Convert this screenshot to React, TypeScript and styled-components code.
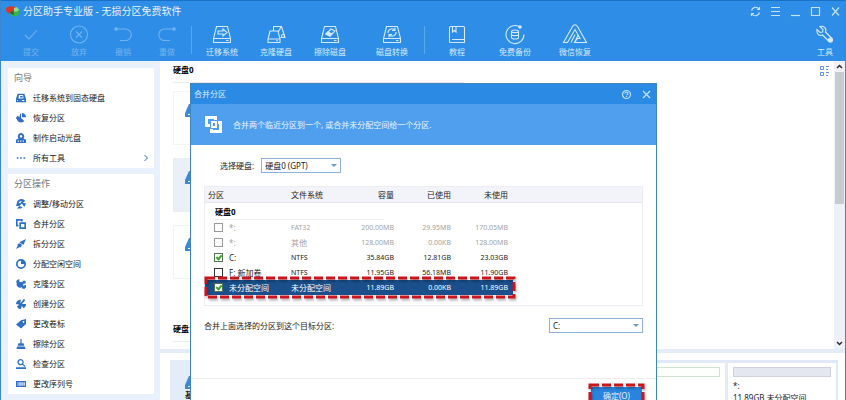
import React, { useState } from "react";
import styled, { createGlobalStyle, css } from "styled-components";

const Global = createGlobalStyle`
  *, *::before, *::after { box-sizing: border-box; }
  body {
    margin: 0;
    font-family: "Noto Sans", "Noto Sans CJK SC", sans-serif;
    font-size: 8px;
    line-height: 12px;
    color: #1c1c1c;
    background: #fff;
  }
  button, input, select { font: inherit; color: inherit; margin: 0; }
  button { border: 0; padding: 0; background: none; cursor: pointer; }
  ul { list-style: none; margin: 0; padding: 0; }
  h1, h2, p { margin: 0; font: inherit; }
`;

/* ---------- window frame ---------- */

const Window = styled.div`
  position: relative;
  display: flex;
  flex-direction: column;
  height: 100vh;
  overflow: hidden;
  border: solid #3a86cf;
  border-width: 0 1px;
`;

const Header = styled.header`
  flex: none;
  background: #2e8de6;
  border-top: 1px solid #1a72c6;
  color: #fff;
`;

const TitleBar = styled.div`
  display: flex;
  align-items: center;
  height: 20px;
  padding-left: 4px;
`;

const AppTitle = styled.h1`
  flex: 1;
  margin-left: 3px;
  font-size: 10px;
  line-height: 16px;
  color: #e6f2fe;
`;

const WindowButton = styled.button`
  display: flex;
  align-items: center;
  justify-content: center;
  width: 20px;
  height: 20px;
  color: #c4e2fb;
`;

const Toolbar = styled.nav`
  display: flex;
  align-items: stretch;
  height: 40px;
  padding-left: 6px;
`;

const Tool = styled.button<{ $width: number; $end?: boolean }>`
  display: flex;
  flex-direction: column;
  align-items: center;
  width: ${(p) => p.$width}px;
  padding-top: 4px;
  gap: 2px;
  color: #d3eafd;
  margin-left: ${(p) => (p.$end ? "auto" : "0")};
  &:disabled { color: #72b3ef; }
`;

const Divider = styled.span`
  flex: none;
  width: 1px;
  margin: 5px 0 7px;
  background: #5ba8ef;
`;

const Body = styled.div`
  display: flex;
  flex: 1;
  min-height: 0;
`;

/* ---------- sidebar ---------- */

const Sidebar = styled.aside`
  flex: none;
  display: flex;
  flex-direction: column;
  gap: 6px;
  width: 159px;
  padding: 7px 6px 0 7px;
  background: #e8f1fc;
`;

const Panel = styled.section`
  flex: none;
  background: #fff;
`;

const PanelTitle = styled.h2`
  padding-left: 6px;
  font-size: 9px;
  line-height: 20px;
  color: #757575;
`;

const PanelItem = styled.button`
  display: flex;
  align-items: center;
  gap: 7px;
  width: 100%;
  height: 20px;
  padding: 0 5px 0 8px;
  text-align: left;
  color: #181818;
  svg { flex: none; color: #2f6fc4; }
  span { flex: 1; }
`;

/* ---------- main area ---------- */

const Main = styled.main`
  display: flex;
  flex: 1;
  flex-direction: column;
  min-width: 0;
`;

const DiskPane = styled.section`
  display: flex;
  flex: 1;
  min-height: 0;
`;

const DiskList = styled.div`
  flex: 1;
  padding: 3px 0 0 13px;
  overflow: hidden;
`;

const DiskTitle = styled.h2`
  width: 45%;
  height: 19px;
  margin-bottom: 8px;
  border-bottom: 1px solid #ececf0;
  font-weight: 700;
  font-size: 8px;
  line-height: 12px;
  color: #000;
`;

const DiskRow = styled.div<{ $active?: boolean }>`
  display: flex;
  align-items: center;
  width: 50%;
  height: 54px;
  margin-bottom: 13px;
  padding: 0 0 16px 11px;
  border: 1px solid ${(p) => (p.$active ? "#e9edf6" : "#f3f4f7")};
  background: ${(p) => (p.$active ? "#ebeff7" : "#fff")};
  color: #3f87d8;
`;

const DiskSpacer = styled.div`
  height: 31px;
`;

const ViewToggle = styled.button`
  align-self: flex-start;
  margin: 3px 4px 0 0;
  color: #5a93e0;
`;

const ScrollTrack = styled.div`
  display: flex;
  flex-direction: column;
  align-items: center;
  width: 11px;
  background: #f0f1f6;
  color: #2c2c2c;
`;

const ScrollButton = styled.button`
  display: flex;
  align-items: center;
  justify-content: center;
  width: 11px;
  height: 11px;
`;

const ScrollThumb = styled.div`
  width: 9px;
  height: 132px;
  background: #c9cacd;
  margin-bottom: auto;
`;

const MapPane = styled.section`
  display: flex;
  flex: 0 0 51px;
  padding: 7px 7px 0 10px;
  border-top: 4px solid #e3ecf7;
  overflow: hidden;
`;

const MapLabel = styled.div`
  width: 120px;
  padding: 16px 0 0 15px;
  background: #e3edfa;
  color: #3f87d8;
  p { color: #222; font-weight: 700; }
  svg { display: block; }
`;

const MapCells = styled.div`
  display: flex;
  flex: 1;
  border: solid #e0e9f5;
  border-width: 3px 2px 0;
`;

const MapCell = styled.div<{ $grow?: boolean }>`
  flex: ${(p) => (p.$grow ? "1" : "0 0 108px")};
  padding: 4px 5px;
  border-right: ${(p) => (p.$grow ? "3px solid #e3ebf6" : "0")};
`;

const UsageBar = styled.div<{ $tone: "free" | "empty" }>`
  height: 10px;
  margin-bottom: 3px;
  border: 1px solid ${(p) => (p.$tone === "free" ? "#cfe3cf" : "#cfd2da")};
  background: ${(p) => (p.$tone === "free" ? "#fdfffd" : "#e4e7ef")};
`;

/* ---------- dialog ---------- */

const Dialog = styled.div`
  position: absolute;
  top: 83px;
  left: 189px;
  right: 188px;
  border: 1px solid #3f87b8;
  background: #fff;
`;

const DialogBar = styled.div`
  display: flex;
  align-items: center;
  height: 20px;
  padding-left: 3px;
  background: #2b8ae4;
  color: #dceefe;
  h2 { flex: 1; }
`;

const Banner = styled.div`
  display: flex;
  align-items: center;
  gap: 11px;
  height: 41px;
  padding-left: 14px;
  background: #509fef;
  color: #ebf5ff;
`;

const DialogBody = styled.div`
  padding: 13px 13px 0 13px;
`;

const Field = styled.div<{ $spread?: boolean }>`
  display: flex;
  align-items: center;
  ${(p) =>
    p.$spread
      ? css`
          justify-content: space-between;
          margin-top: 12px;
        `
      : css`
          gap: 7px;
          padding-left: 16px;
          margin-bottom: 13px;
        `}
`;

const SelectBox = styled.span<{ $width: number }>`
  position: relative;
  width: ${(p) => p.$width}px;
  height: 15px;
  select {
    display: block;
    width: 100%;
    height: 15px;
    padding: 0 12px 0 3px;
    appearance: none;
    border: 1px solid #8fb0d8;
    border-radius: 0;
    background: #fff;
    line-height: 13px;
  }
  svg {
    position: absolute;
    top: 6px;
    right: 4px;
    pointer-events: none;
    color: #6b9cc4;
  }
`;

const TableFrame = styled.div`
  min-height: 120px;
  border: 1px solid #ececf2;
`;

const Table = styled.table`
  width: 100%;
  table-layout: fixed;
  border-collapse: separate;
  border-spacing: 0;
  th, td { padding: 0; text-align: left; white-space: nowrap; }
  thead th {
    height: 16px;
    font-weight: 400;
    background: #f3f4fa;
    border-bottom: 1px solid #e4e5ee;
  }
  thead th:first-child { padding-left: 3px; }
`;

const Num = styled.td`
  && { text-align: right; }
  font-size: 7px;
`;

const NumHead = styled.th`
  && { text-align: right; }
`;

const GroupCell = styled.th`
  && { height: 17px; padding-left: 10px; }
  font-weight: 700;
  color: #000;
  div { width: 169px; border-bottom: 1px solid #ededf1; line-height: 15px; }
`;

const Row = styled.tr<{ $muted?: boolean; $selected?: boolean }>`
  position: relative;
  color: ${(p) => (p.$selected ? "#fff" : p.$muted ? "#a3a3a3" : "#222")};
  td { height: 15px; }
  td:not(:last-child) {
    background: ${(p) => (p.$selected ? "#1a4f8b" : "transparent")};
  }
`;

const Latin = styled.span`
  font-size: 7px;
`;

const PartLabel = styled.label`
  display: flex;
  align-items: center;
  gap: 6px;
  padding-left: 9px;
`;

const Check = styled.input`
  position: relative;
  flex: none;
  appearance: none;
  width: 9px;
  height: 9px;
  border: 1px solid #333;
  background: #fff;
  &:disabled { border-color: #9a9a9a; }
  &:checked { border-color: #4d7350; }
  &:checked::after {
    content: "";
    position: absolute;
    top: 0;
    left: 2px;
    width: 4px;
    height: 6px;
    border: solid #36a629;
    border-width: 0 2px 2px 0;
    transform: rotate(40deg);
  }
`;

const RowMark = styled.svg`
  position: absolute;
  top: -3px;
  left: 0;
  width: 310px;
  height: 21px;
  overflow: visible;
  pointer-events: none;
  filter: drop-shadow(1px 2px 1px rgba(0, 0, 0, 0.3));
`;

const Footer = styled.footer`
  display: flex;
  justify-content: flex-end;
  margin-top: 45px;
  padding: 8px 14px 12px;
  border-top: 1px solid #ececec;
`;

const OkButton = styled.button`
  position: relative;
  width: 51px;
  height: 17px;
  background: #2a83dc;
  color: #e4f2ff;
`;

const ButtonMark = styled.svg`
  position: absolute;
  top: -3px;
  left: -2px;
  width: 56px;
  height: 23px;
  overflow: visible;
  pointer-events: none;
  filter: drop-shadow(1px 2px 1px rgba(0, 0, 0, 0.3));
`;

/* ---------- icons ---------- */

const toolIcons: Record<string, React.ReactNode> = {
  check: <path d="M4 10l4 4 8-9" />,
  discard: (<><circle cx="10" cy="9.500" r="8.500" /><path d="M7 6.500l6 6M13 6.500l-6 6" /></>),
  undo: (<><path d="M3.500 4h9a5 5 0 0 1 0 11.500H7" /><circle cx="3" cy="4" r="1.200" fill="currentColor" /></>),
  redo: (<><path d="M16.500 4h-9a5 5 0 0 0 0 11.500H13" /><circle cx="17" cy="4" r="1.200" fill="currentColor" /></>),
  migrate: (<><path d="M4.500 1.500h11l3 12v4h-17v-4zM1.500 13.500h17M14 15.500h2.500M6 6h5V4l4 3.500-4 3.500V9H6z" /></>),
  clone: (<><path d="M4 6h8l2 8v3.500H2V14zM2 14h12M10 15.800h2M7.500 6V1.500h8l3.500 11h-4.500M12 7.500l3-5.500" /><circle cx="17" cy="11" r="1.500" /></>),
  erase: (<><path d="M4.500 1.500h11l3 12v4h-17v-4zM1.500 13.500h17M14 15.500h2.500M6 9l5-5 4 2-5 5z" /><path d="M8 7l4 2-2 2-4-2z" fill="currentColor" /></>),
  convert: (<><path d="M4.500 1.500h11l3 12v4h-17v-4zM1.500 13.500h17M14 15.500h2.500M6 8a3.800 3.800 0 0 1 6.500-3M14 7a3.800 3.800 0 0 1-6.500 3M13 2.500v3h-3M7 12.500v-3h3" /></>),
  book: (<><path d="M3.500 1.500h13a1 1 0 0 1 1 1v15h-14a1 1 0 0 1-1-1v-14a1 1 0 0 1 1-1zM5.500 1.500v5.500l1.800-1.500L9 7V1.500M5 14.500h12" /></>),
  backup: (<><path d="M14 1.500A9 9 0 1 0 19 9.500" /><circle cx="15" cy="2" r="1.200" fill="currentColor" /><path d="M6.500 6.500c0-2 7-2 7 0v6c0 2-7 2-7 0zM6.500 6.500c0 1.500 7 1.500 7 0M6.500 9.500c0 1.500 7 1.500 7 0" /></>),
  wechat: (<path d="M-1.500 17.500L7.500 1.500q2.500-3.500 5 0l9 16H9.500l3-4h2.500L10 4.500 2.500 17.500zM9.500 17.500L13 10.500M6 17.500L10 9.500" />),
  wrench: (<><path d="M5 1.500l3 3-.500 2.500-2.500.500-3-3c-1 4 2 7 5.500 5.500l6 6a2 2 0 0 0 3-3l-6-6C12 3.500 9 .500 5 1.500z" /><circle cx="15.500" cy="15" r="2" fill="currentColor" /></>),
};

const ToolIcon = ({ name }: { name: string }) => (
  <svg width="20" height="19" viewBox="0 0 20 19" fill="none" stroke="currentColor" strokeWidth="1.100" overflow="visible" aria-hidden>
    {toolIcons[name]}
  </svg>
);

const sideIcons: Record<string, React.ReactNode> = {
  drive: (<path fillRule="evenodd" d="M2 1h8l2 6v4H0V7zM3.500 2.500L3 6.500h6l-.500-4zM5 3.500h3v2H5zM1.500 8.500v1h1v-1zM7 8.500v1h3v-1z" />),
  recover: (<path d="M6 1v5l4 3.500A5 5 0 1 1 2 3l2 2 1-4zM7 0a5 5 0 0 1 5 5H7zM0 5h3v2H0z" />),
  disc: (<path fillRule="evenodd" d="M6 0a4 4 0 0 1 3 6.500L12 8v4H0V8l3-1.500A4 4 0 0 1 6 0zM6 2.500a1.500 1.500 0 1 0 .1 0zM2 9v1.500h1.500V9zM5 9v1.500h1.500V9zM8 9v1.500h1.500V9z" />),
  dots: (<path d="M1 5h2v2H1zM5 5h2v2H5zM9 5h2v2H9z" />),
  resize: (<path d="M1 5a5.500 5.500 0 0 1 10-2.500l-3 2 4 1-2 4-3-4-3 3 4 1-2 2H1l3-3H0zM3 3.500l2 2 2-3.500z" />),
  merge: (<path fillRule="evenodd" d="M0 0h8v3H6V2H2v5h1v2H0zM4 4h8v8H4zM6 6v4h4V6z" />),
  split: (<path d="M12 0L9 7 7 6 6 5 4 4zM5 5l2 2-1 3-2 0-4 2 2-4 0-2z" />),
  allocate: (<path fillRule="evenodd" d="M6 0A6 6 0 1 0 12 6 6 6 0 0 0 6 0zM6 2v4h4a4 4 0 1 1-4-4z" />),
  clone: (<path d="M4 0v3.500h3.500A4 4 0 1 1 1 5a3 3 0 0 1 0-3.500zM8 2h3l1 3-4 1zM7 7l2 1 3-1v3l-2 2-3-1z" />),
  create: (<path d="M6 1l-1 4 3-3 2 1-3 3h5a5 5 0 0 1-3 5L7 8l-1 4A5 5 0 0 1 1 9l3-2-4-1a5 5 0 0 1 6-5zM9 0h1v1h1v1h-1v1H9V2H8V1h1z" />),
  tag: (<path fillRule="evenodd" d="M6 1.500L12 0v6l-6 5.500-6-5zM9 2.500A1 1 0 1 0 9.100 2.500z" />),
  broom: (<path d="M5.300 0h1.400v5H9l1 3H2l1-3h2.300zM1.500 9h9l1 3H.500z" />),
  search: (<path fillRule="evenodd" d="M5.500 0a3.800 3.800 0 0 1 3 6l3 2.500-1 1-3-2.500A3.800 3.800 0 1 1 5.500 0zM5.500 1.500a2.200 2.200 0 1 0 .1 0zM0 10h12v2H0z" />),
  serial: (<path fillRule="evenodd" d="M0 2.500h12v7H0zM2 4v4h1V4zM4 4v4h1.500V4zM6.500 4v4H8V4zM9 4v4h1.500V4z" />),
};

const SideIcon = ({ name }: { name: string }) => (
  <svg width="10" height="10" viewBox="0 0 12 12" fill="currentColor" aria-hidden>
    {sideIcons[name]}
  </svg>
);

const DiskGlyph = () => (
  <svg width="20" height="13" viewBox="0 0 20 13" fill="currentColor" aria-hidden>
    <path fillRule="evenodd" d="M4 0h12l4 9v4H0V9zM3 10v1h3v-1z" />
  </svg>
);

const Caret = () => (
  <svg width="6" height="3" viewBox="0 0 6 3" fill="currentColor" aria-hidden><path d="M0 0h6L3 3z" /></svg>
);

const Logo = () => (
  <svg width="15" height="12" viewBox="0 0 15 12" aria-hidden>
    <ellipse cx="9.500" cy="7" rx="5" ry="4.500" fill="#37b34a" />
    <path d="M1 3l4-2 5 1 2 3-3 1-1 3-5-1-2-2z" fill="#d9392c" />
    <path d="M9 3l3-1 2 3-3 2-2-1z" fill="#8fe08a" />
    <path d="M5 7l3-1 1 4-3-1z" fill="#1c6f3a" />
  </svg>
);

/* ---------- data ---------- */

type ToolDef = { label: string; icon: string; width: number; disabled?: boolean };

const toolGroups: ToolDef[][] = [
  [
    { label: "提交", icon: "check", width: 48, disabled: true },
    { label: "放弃", icon: "discard", width: 48, disabled: true },
    { label: "撤销", icon: "undo", width: 40, disabled: true },
    { label: "重做", icon: "redo", width: 48, disabled: true },
  ],
  [
    { label: "迁移系统", icon: "migrate", width: 60 },
    { label: "克隆硬盘", icon: "clone", width: 48 },
    { label: "擦除磁盘", icon: "erase", width: 60 },
    { label: "磁盘转换", icon: "convert", width: 64 },
  ],
  [
    { label: "教程", icon: "book", width: 64 },
    { label: "免费备份", icon: "backup", width: 52 },
    { label: "微信恢复", icon: "wechat", width: 68 },
  ],
];

const panels = [
  {
    title: "向导",
    items: [
      ["迁移系统到固态硬盘", "drive"],
      ["恢复分区", "recover"],
      ["制作启动光盘", "disc"],
      ["所有工具", "dots"],
    ],
  },
  {
    title: "分区操作",
    items: [
      ["调整/移动分区", "resize"],
      ["合并分区", "merge"],
      ["拆分分区", "split"],
      ["分配空闲空间", "allocate"],
      ["克隆分区", "clone"],
      ["创建分区", "create"],
      ["更改卷标", "tag"],
      ["擦除分区", "broom"],
      ["检查分区", "search"],
      ["更改序列号", "serial"],
    ],
  },
];

const partitions = [
  { name: "*:", fs: "FAT32", size: "200.00MB", used: "29.95MB", free: "170.05MB", muted: true },
  { name: "*:", fs: "其他", size: "128.00MB", used: "0.00KB", free: "128.00MB", muted: true },
  { name: "C:", fs: "NTFS", size: "35.84GB", used: "12.81GB", free: "23.03GB", checked: true },
  { name: "F: 新加卷", fs: "NTFS", size: "11.95GB", used: "56.18MB", free: "11.90GB" },
  { name: "未分配空间", fs: "未分配空间", size: "11.89GB", used: "0.00KB", free: "11.89GB", checked: true, selected: true },
];

const windowButtons = [
  { label: "刷新", art: <path d="M1.500 4.500A4.200 4.200 0 0 1 9 3M9.500 6.500A4.200 4.200 0 0 1 2 8M9.500 1v2.500H7M1.500 10V7.500H4" /> },
  { label: "菜单", art: <path d="M1 1.500h9M1 5.500h9M1 9.500h9" /> },
  { label: "最小化", art: <path d="M1 9.500h9" /> },
  { label: "最大化", art: <path d="M1.500 1.500h8v8h-8z" /> },
  { label: "关闭", art: <path d="M2 1.500l7 8M9 1.500l-7 8" /> },
];

const Glyph = ({ children }: { children: React.ReactNode }) => (
  <svg width="11" height="11" viewBox="0 0 11 11" fill="none" stroke="currentColor" strokeWidth="1.200" aria-hidden>{children}</svg>
);

/* ---------- pieces ---------- */

function MergeDialog() {
  const [checked, setChecked] = useState(partitions.map((p) => !!p.checked));
  const toggle = (i: number) => setChecked(checked.map((c, j) => (j === i ? !c : c)));
  return (
    <Dialog role="dialog" aria-labelledby="merge-title">
      <DialogBar>
        <h2 id="merge-title">合并分区</h2>
        <WindowButton aria-label="帮助">
          <Glyph>
            <circle cx="5.500" cy="5.500" r="4" />
            <path d="M4 4.500q0-1.500 1.500-1.500T7 4.300 5.500 6M5.500 7v1" />
          </Glyph>
        </WindowButton>
        <WindowButton aria-label="关闭对话框"><Glyph><path d="M2 2l7 7M9 2l-7 7" /></Glyph></WindowButton>
      </DialogBar>
      <Banner>
        <svg width="17" height="17" viewBox="0 0 17 17" fill="#fff" aria-hidden>
          <path d="M0 0h12v4H9V3H3v5h2v3H0z" />
          <path d="M13 5h4v12H5v-4h3v1h6V8h-1z" />
          <path fillRule="evenodd" d="M6 5h6v7H6zM8 7v3h2V7z" />
        </svg>
        <p>合并两个临近分区到一个, 或合并未分配空间给一个分区.</p>
      </Banner>
      <DialogBody>
        <Field>
          <label htmlFor="disk">选择硬盘:</label>
          <SelectBox $width={80}>
            <select id="disk"><option>硬盘0 (GPT)</option></select>
            <Caret />
          </SelectBox>
        </Field>
        <TableFrame>
          <Table>
            <colgroup>
              <col width="86" /><col width="50" /><col width="53" /><col width="57" /><col width="57" /><col width="5" /><col />
            </colgroup>
            <thead>
              <tr>
                <th>分区</th><th>文件系统</th><NumHead>容量</NumHead><NumHead>已使用</NumHead><NumHead>未使用</NumHead><th /><th />
              </tr>
            </thead>
            <tbody>
              <tr><GroupCell colSpan={7}><div>硬盘0</div></GroupCell></tr>
              {partitions.map((p, i) => (
                <Row key={i} $muted={p.muted} $selected={p.selected}>
                  <td>
                    <PartLabel>
                      <Check type="checkbox" checked={checked[i]} disabled={p.muted} onChange={() => toggle(i)} />
                      {p.name}
                    </PartLabel>
                    {p.selected && (
                      <RowMark aria-hidden>
                        <rect x="1" y="1" width="308" height="19" fill="none" stroke="#c9151e" strokeWidth="3" strokeDasharray="9 3" />
                      </RowMark>
                    )}
                  </td>
                  <td>{/^[A-Z]/.test(p.fs) ? <Latin>{p.fs}</Latin> : p.fs}</td>
                  <Num>{p.size}</Num>
                  <Num>{p.used}</Num>
                  <Num>{p.free}</Num>
                  <td />
                  <td />
                </Row>
              ))}
            </tbody>
          </Table>
        </TableFrame>
        <Field $spread>
          <label htmlFor="target">合并上面选择的分区到这个目标分区:</label>
          <SelectBox $width={94}>
            <select id="target"><option>C:</option></select>
            <Caret />
          </SelectBox>
        </Field>
      </DialogBody>
      <Footer>
        <OkButton>
          确定(O)
          <ButtonMark aria-hidden>
            <rect x="1" y="1" width="53" height="21" fill="none" stroke="#c9151e" strokeWidth="3" strokeDasharray="9 3" />
          </ButtonMark>
        </OkButton>
      </Footer>
    </Dialog>
  );
}

export default function App() {
  return (
    <>
      <Global />
      <Window>
        <Header>
          <TitleBar>
            <Logo />
            <AppTitle>分区助手专业版 - 无损分区免费软件</AppTitle>
            {windowButtons.map((b) => (
              <WindowButton key={b.label} aria-label={b.label}><Glyph>{b.art}</Glyph></WindowButton>
            ))}
          </TitleBar>
          <Toolbar>
            {toolGroups.map((group, i) => (
              <React.Fragment key={i}>
                {i > 0 && <Divider />}
                {group.map((t) => (
                  <Tool key={t.label} $width={t.width} disabled={t.disabled}>
                    <ToolIcon name={t.icon} />
                    {t.label}
                  </Tool>
                ))}
              </React.Fragment>
            ))}
            <Tool $width={40} $end><ToolIcon name="wrench" />工具</Tool>
          </Toolbar>
        </Header>
        <Body>
          <Sidebar>
            {panels.map((panel) => (
              <Panel key={panel.title}>
                <PanelTitle>{panel.title}</PanelTitle>
                <ul>
                  {panel.items.map(([label, icon]) => (
                    <li key={label}>
                      <PanelItem>
                        <SideIcon name={icon} />
                        <span>{label}</span>
                        {icon === "dots" && (
                          <svg width="6" height="8" viewBox="0 0 6 8" fill="none" stroke="currentColor" aria-hidden><path d="M1.500 1l3 3-3 3" /></svg>
                        )}
                      </PanelItem>
                    </li>
                  ))}
                </ul>
              </Panel>
            ))}
          </Sidebar>
          <Main>
            <DiskPane>
              <DiskList>
                <DiskTitle>硬盘0</DiskTitle>
                <DiskRow><DiskGlyph /></DiskRow>
                <DiskRow $active><DiskGlyph /></DiskRow>
                <DiskRow><DiskGlyph /></DiskRow>
                <DiskSpacer />
                <DiskTitle>硬盘1</DiskTitle>
              </DiskList>
              <ViewToggle aria-label="切换视图">
                <svg width="11" height="13" viewBox="0 0 11 13" fill="none" stroke="currentColor" aria-hidden>
                  <path d="M1.500 2.500h3v3h-3zM1.500 8.500h3v3h-3zM7 2.500h3M7 5.500h2M7 8.500h3M7 11.500h2" />
                </svg>
              </ViewToggle>
              <ScrollTrack>
                <ScrollButton aria-label="向上滚动"><svg width="7" height="5" viewBox="0 0 7 5" fill="none" stroke="currentColor" strokeWidth="1.500"><path d="M1 4l2.500-2.500L6 4" /></svg></ScrollButton>
                <ScrollThumb />
                <ScrollButton aria-label="向下滚动"><svg width="7" height="5" viewBox="0 0 7 5" fill="none" stroke="currentColor" strokeWidth="1.500"><path d="M1 1l2.500 2.500L6 1" /></svg></ScrollButton>
              </ScrollTrack>
            </DiskPane>
            <MapPane>
              <MapLabel><DiskGlyph /><p>基本 GPT</p></MapLabel>
              <MapCells>
                <MapCell $grow><UsageBar $tone="free" /></MapCell>
                <MapCell>
                  <UsageBar $tone="empty" />
                  <p>*:</p>
                  <p>11.89GB 未分配空间</p>
                </MapCell>
              </MapCells>
            </MapPane>
          </Main>
        </Body>
        <MergeDialog />
      </Window>
    </>
  );
}
